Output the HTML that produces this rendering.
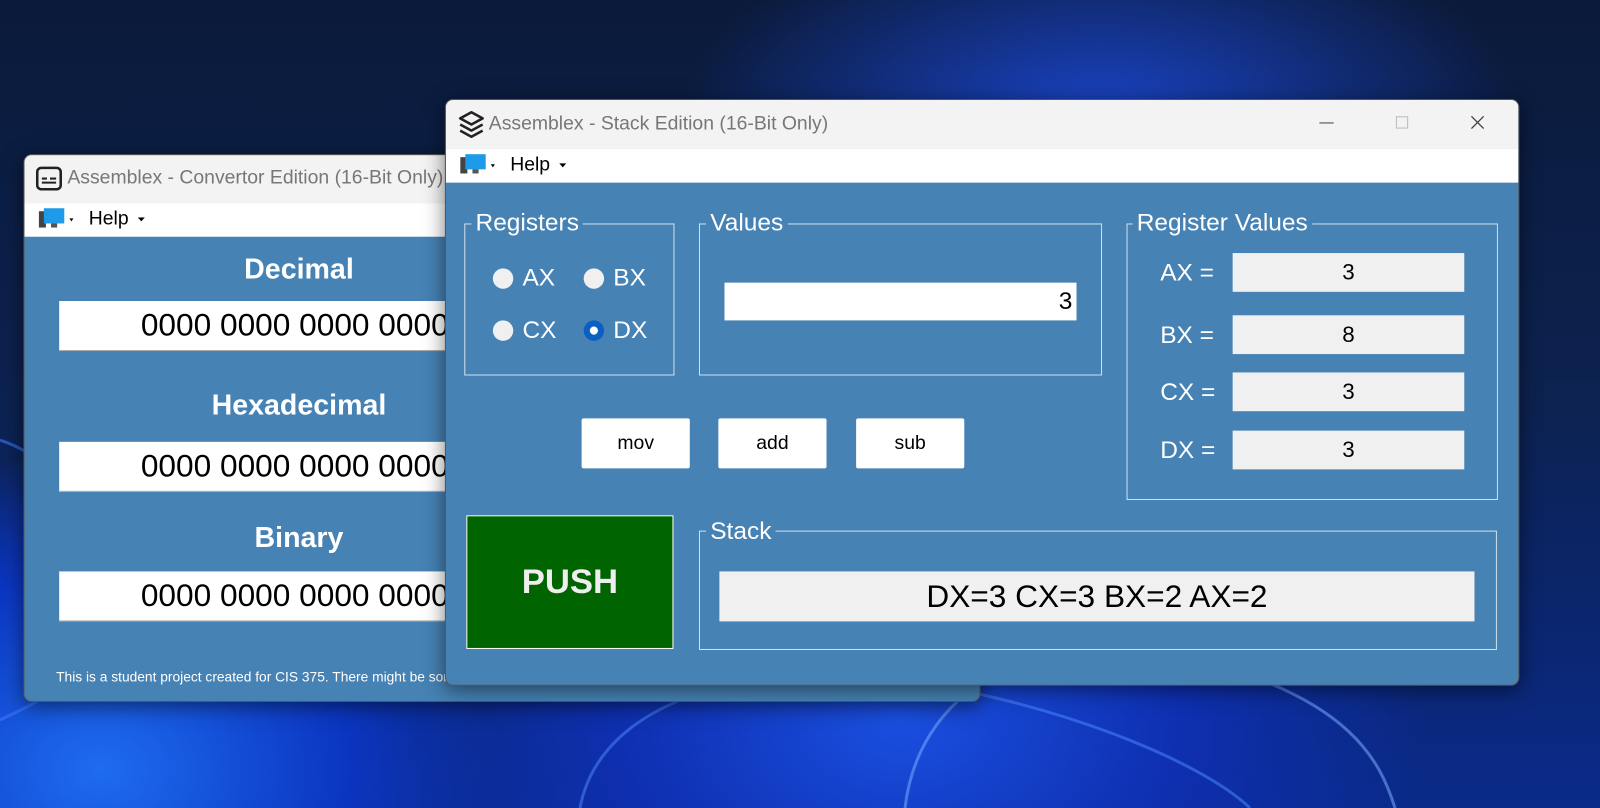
<!DOCTYPE html>
<html><head><meta charset="utf-8"><style>
*{margin:0;padding:0;box-sizing:border-box}
html,body{width:1600px;height:808px;overflow:hidden}
body{position:relative;font-family:"Liberation Sans",sans-serif;background:#0b1a3a}
#bg{position:absolute;left:0;top:0;width:1600px;height:808px;overflow:hidden;
background:radial-gradient(ellipse 700px 500px at 900px 720px,#1a4fe0 0%,#0e2fb0 40%,transparent 75%),
radial-gradient(ellipse 500px 400px at 100px 770px,#1e6cf0 0%,#0b35c0 50%,transparent 80%),
radial-gradient(ellipse 600px 300px at 1100px 120px,#1a44c8 0%,transparent 70%),
linear-gradient(180deg,#0b1a3a 0%,#0c2250 50%,#0a2a8a 100%);}
#wrap{position:absolute;left:0;top:0;width:1500px;height:700px;transform:scale(1.0204);transform-origin:0 0}
.a{position:absolute}
.win{position:absolute;border-radius:8px;overflow:hidden;box-shadow:0 4px 20px rgba(0,0,0,.5);background:#4682b4;border:1px solid #555}
.tb{position:absolute;left:0;right:0;top:0;background:#f3f3f3;color:#777;font-size:19px}
.mb{position:absolute;left:0;right:0;background:#fff;font-size:19px;color:#000}
.box{position:absolute;border:1px solid rgba(255,255,255,.75)}
.lbl{position:absolute;background:#4682b4;color:#fff;font-size:24px;padding:0 4px;line-height:28px}
.w{color:#fff;position:absolute;font-size:24px}
.btn{position:absolute;background:#fff;font-size:19px;text-align:center;border-radius:2px;color:#000}
.rv{position:absolute;background:#f0f0f0;font-size:22px;text-align:center;line-height:38px;color:#000}
.rad{position:absolute;width:20px;height:20px;border-radius:50%;background:#f0f0f0}
.big{position:absolute;background:#fff;font-size:31px;line-height:48px;color:#000;border-bottom:1px solid #aaa;white-space:nowrap;overflow:hidden}
.h{position:absolute;color:#fff;font-weight:bold;font-size:28px;text-align:center;width:470px;left:34px}
</style></head><body>
<div id="bg">
<svg width="1600" height="808" style="position:absolute;left:0;top:0">
<path d="M580 808C600 700 750 660 900 680S1200 760 1250 808" fill="none" stroke="rgba(80,140,255,.5)" stroke-width="3"/>
<path d="M905 808C920 680 1050 620 1200 660S1380 760 1395 808" fill="none" stroke="rgba(120,170,255,.55)" stroke-width="3"/>
<path d="M0 440C60 460 100 520 100 600S40 700 0 720" fill="none" stroke="rgba(60,120,255,.6)" stroke-width="3"/>
</svg>
</div>
<div id="wrap">
<!-- left window -->
<div class="win" style="left:23px;top:151px;width:938px;height:537px">
 <div class="tb" style="height:47px"><svg class="a" style="left:11px;top:11px" width="26" height="24" viewBox="0 0 26 24"><rect x="1.5" y="1.5" width="23" height="21" rx="4" fill="none" stroke="#222" stroke-width="2.5"/><path d="M6 12h5M14 12h6M6 16h14" stroke="#222" stroke-width="2"/></svg><span class="a" style="left:42px;top:12px">Assemblex - Convertor Edition (16-Bit Only)</span></div>
 <div class="mb" style="top:47px;height:33px"><svg class="a" style="left:14px;top:5px" width="40" height="22"><rect x="0" y="3" width="7" height="16" fill="#444"/><rect x="5" y="0" width="20" height="15" fill="#1e9be8"/><rect x="12" y="15" width="6" height="4" fill="#555"/><path d="M30 10l4 0-2 3z" fill="#000"/></svg><span class="a" style="left:63px;top:5px">Help</span><svg class="a" style="left:111px;top:14px" width="8" height="6"><path d="M0 0h7l-3.5 4z" fill="#000"/></svg></div>
 <div class="h" style="top:96px">Decimal</div>
 <div class="big" style="left:34px;top:143px;width:420px;padding-left:80px">0000 0000 0000 0000</div>
 <div class="h" style="top:229px">Hexadecimal</div>
 <div class="big" style="left:34px;top:281px;width:420px;padding-left:80px">0000 0000 0000 0000</div>
 <div class="h" style="top:359px">Binary</div>
 <div class="big" style="left:34px;top:408px;width:420px;padding-left:80px">0000 0000 0000 0000</div>
 <div class="a" style="left:31px;top:504px;color:#fff;font-size:13.5px">This is a student project created for CIS 375. There might be some bugs in the program.</div>
</div>
<!-- main window -->
<div class="win" style="left:436px;top:97px;width:1053px;height:575px">
 <div class="tb" style="height:48px"><svg class="a" style="left:12px;top:10px" width="26" height="28" viewBox="0 0 26 28"><path d="M13 2L24 8 13 14 2 8z" fill="none" stroke="#222" stroke-width="2.5" stroke-linejoin="round"/><path d="M2 14l11 6 11-6M2 20l11 6 11-6" fill="none" stroke="#222" stroke-width="2.5" stroke-linejoin="round"/></svg><span class="a" style="left:42px;top:13px">Assemblex - Stack Edition (16-Bit Only)</span>
 <div class="a" style="left:856px;top:22px;width:14px;height:1px;background:#444"></div>
 <div class="a" style="left:931px;top:16px;width:12px;height:12px;border:1px solid #bbb"></div>
 <svg class="a" style="left:1004px;top:15px" width="14" height="14"><path d="M1 1L13 13M13 1L1 13" stroke="#444" stroke-width="1.3"/></svg></div>
 <div class="mb" style="top:48px;height:33px"><svg class="a" style="left:14px;top:5px" width="40" height="22"><rect x="0" y="3" width="7" height="16" fill="#444"/><rect x="5" y="0" width="20" height="15" fill="#1e9be8"/><rect x="12" y="15" width="6" height="4" fill="#555"/><path d="M30 10l4 0-2 3z" fill="#000"/></svg><span class="a" style="left:63px;top:5px">Help</span><svg class="a" style="left:111px;top:14px" width="8" height="6"><path d="M0 0h7l-3.5 4z" fill="#000"/></svg></div>
 <div class="box" style="left:18px;top:121px;width:206px;height:149px"></div><div class="lbl" style="left:25px;top:107px">Registers</div>
 <div class="rad" style="left:46px;top:165px"></div><div class="w" style="left:75px;top:161px">AX</div>
 <div class="rad" style="left:135px;top:165px"></div><div class="w" style="left:164px;top:161px">BX</div>
 <div class="rad" style="left:46px;top:216px"></div><div class="w" style="left:75px;top:212px">CX</div>
 <div class="rad" style="left:135px;top:216px;background:#0a5fc0"><div class="a" style="left:6px;top:6px;width:8px;height:8px;border-radius:50%;background:#fff"></div></div><div class="w" style="left:164px;top:212px">DX</div>
 <div class="box" style="left:248px;top:121px;width:395px;height:149px"></div><div class="lbl" style="left:255px;top:107px">Values</div>
 <div class="a" style="left:273px;top:179px;width:345px;height:37px;background:#fff;text-align:right;padding-right:4px;font-size:24px;line-height:37px">3</div>
 <div class="box" style="left:667px;top:121px;width:364px;height:271px"></div><div class="lbl" style="left:673px;top:107px">Register Values</div>
 <div class="w" style="left:700px;top:156px">AX =</div><div class="rv" style="left:771px;top:150px;width:227px">3</div>
 <div class="w" style="left:700px;top:217px">BX =</div><div class="rv" style="left:771px;top:211px;width:227px">8</div>
 <div class="w" style="left:700px;top:273px">CX =</div><div class="rv" style="left:771px;top:267px;width:227px">3</div>
 <div class="w" style="left:700px;top:330px">DX =</div><div class="rv" style="left:771px;top:324px;width:227px">3</div>
 <div class="btn" style="left:133px;top:312px;width:106px;height:49px;line-height:49px">mov</div>
 <div class="btn" style="left:267px;top:312px;width:106px;height:49px;line-height:49px">add</div>
 <div class="btn" style="left:402px;top:312px;width:106px;height:49px;line-height:49px">sub</div>
 <div class="a" style="left:20px;top:407px;width:203px;height:131px;background:#006400;border:1px solid #fff;color:#eee;font-weight:bold;font-size:34px;text-align:center;line-height:129px">PUSH</div>
 <div class="box" style="left:248px;top:422px;width:782px;height:117px"></div><div class="lbl" style="left:255px;top:409px">Stack</div>
 <div class="a" style="left:268px;top:462px;width:740px;height:49px;background:#f0f0f0;text-align:center;font-size:31px;line-height:49px">DX=3 CX=3 BX=2 AX=2</div>
</div>
</div>
</body></html>
